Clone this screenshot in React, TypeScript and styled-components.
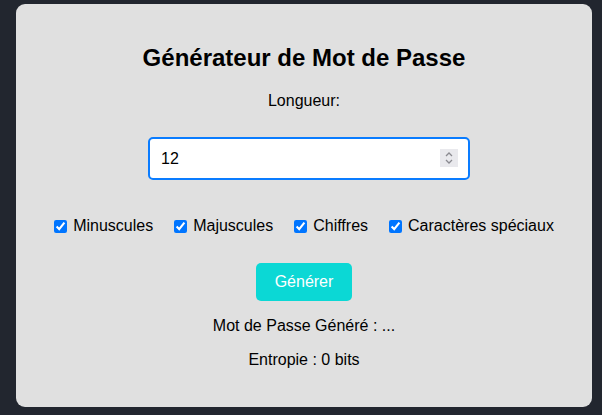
import React, { useState } from 'react';
import styled, { createGlobalStyle } from 'styled-components';

const GlobalStyle = createGlobalStyle`
  html, body {
    margin: 0;
    padding: 0;
    background: #22262f;
    font-family: "Liberation Sans", Arial, sans-serif;
  }
`;

const Page = styled.div`
  padding: 4px 10px 9px 16px;
`;

const Card = styled.div`
  width: 576px;
  box-sizing: border-box;
  background: #e0e0e0;
  border-radius: 9px;
  padding: 20px 20px 22px;
  text-align: center;
  color: #000;
`;

const Title = styled.h2`
  font-size: 24px;
  font-weight: bold;
  margin: 20px 0 20px;
`;

const FieldLabel = styled.label`
  display: block;
  font-size: 16px;
  margin-bottom: 27px;
`;

const InputWrap = styled.div`
  position: relative;
  width: 322px;
  margin-left: 112px;
`;

const NumberInput = styled.input`
  display: block;
  width: 100%;
  height: 43px;
  box-sizing: border-box;
  padding: 10px 11px;
  border: 2px solid #0a7cff;
  border-radius: 5px;
  background: #fff;
  font-family: "Liberation Sans", Arial, sans-serif;
  font-size: 16px;
  color: #000;
  outline: none;
  -moz-appearance: textfield;

  &::-webkit-outer-spin-button,
  &::-webkit-inner-spin-button {
    -webkit-appearance: none;
    margin: 0;
  }
`;

const Spinner = styled.div`
  position: absolute;
  right: 12px;
  top: 12px;
  width: 18px;
  height: 18px;
  background: #e9e9ed;
  display: flex;
  align-items: center;
  justify-content: center;
  pointer-events: none;
`;

const Options = styled.div`
  display: flex;
  justify-content: center;
  gap: 21px;
  margin-top: 37px;
  font-size: 16px;
`;

const Option = styled.label`
  display: inline-flex;
  align-items: center;
  gap: 6px;
  white-space: nowrap;

  input {
    margin: 0;
    width: 13px;
    height: 13px;
  }
`;

const GenerateButton = styled.button`
  margin-top: 28px;
  padding: 10px 19px;
  border: none;
  border-radius: 5px;
  background: #0bd8d5;
  color: #fff;
  font-family: "Liberation Sans", Arial, sans-serif;
  font-size: 16px;
  line-height: 18px;
  cursor: pointer;
`;

const Line = styled.p`
  font-size: 16px;
  margin: 16px 0;
`;

const options = ['Minuscules', 'Majuscules', 'Chiffres', 'Caractères spéciaux'];

const App: React.FC = () => {
  const [length, setLength] = useState('12');
  const [checked, setChecked] = useState<boolean[]>([true, true, true, true]);

  return (
    <Page>
      <GlobalStyle />
      <Card>
        <Title>Générateur de Mot de Passe</Title>
        <FieldLabel htmlFor="length">Longueur:</FieldLabel>
        <InputWrap>
          <NumberInput
            id="length"
            type="number"
            value={length}
            onChange={e => setLength(e.target.value)}
          />
          <Spinner>
            <svg width="10" height="14" viewBox="0 0 10 14" fill="none" stroke="#8a8a90" strokeWidth="1.3">
              <path d="M2 5 L5 2 L8 5" />
              <path d="M2 9 L5 12 L8 9" />
            </svg>
          </Spinner>
        </InputWrap>
        <Options>
          {options.map((name, i) => (
            <Option key={name}>
              <input
                type="checkbox"
                checked={checked[i]}
                onChange={() => setChecked(c => c.map((v, j) => (j === i ? !v : v)))}
              />
              {name}
            </Option>
          ))}
        </Options>
        <GenerateButton>Générer</GenerateButton>
        <Line>Mot de Passe Généré : ...</Line>
        <Line>Entropie : 0 bits</Line>
      </Card>
    </Page>
  );
};

export default App;
